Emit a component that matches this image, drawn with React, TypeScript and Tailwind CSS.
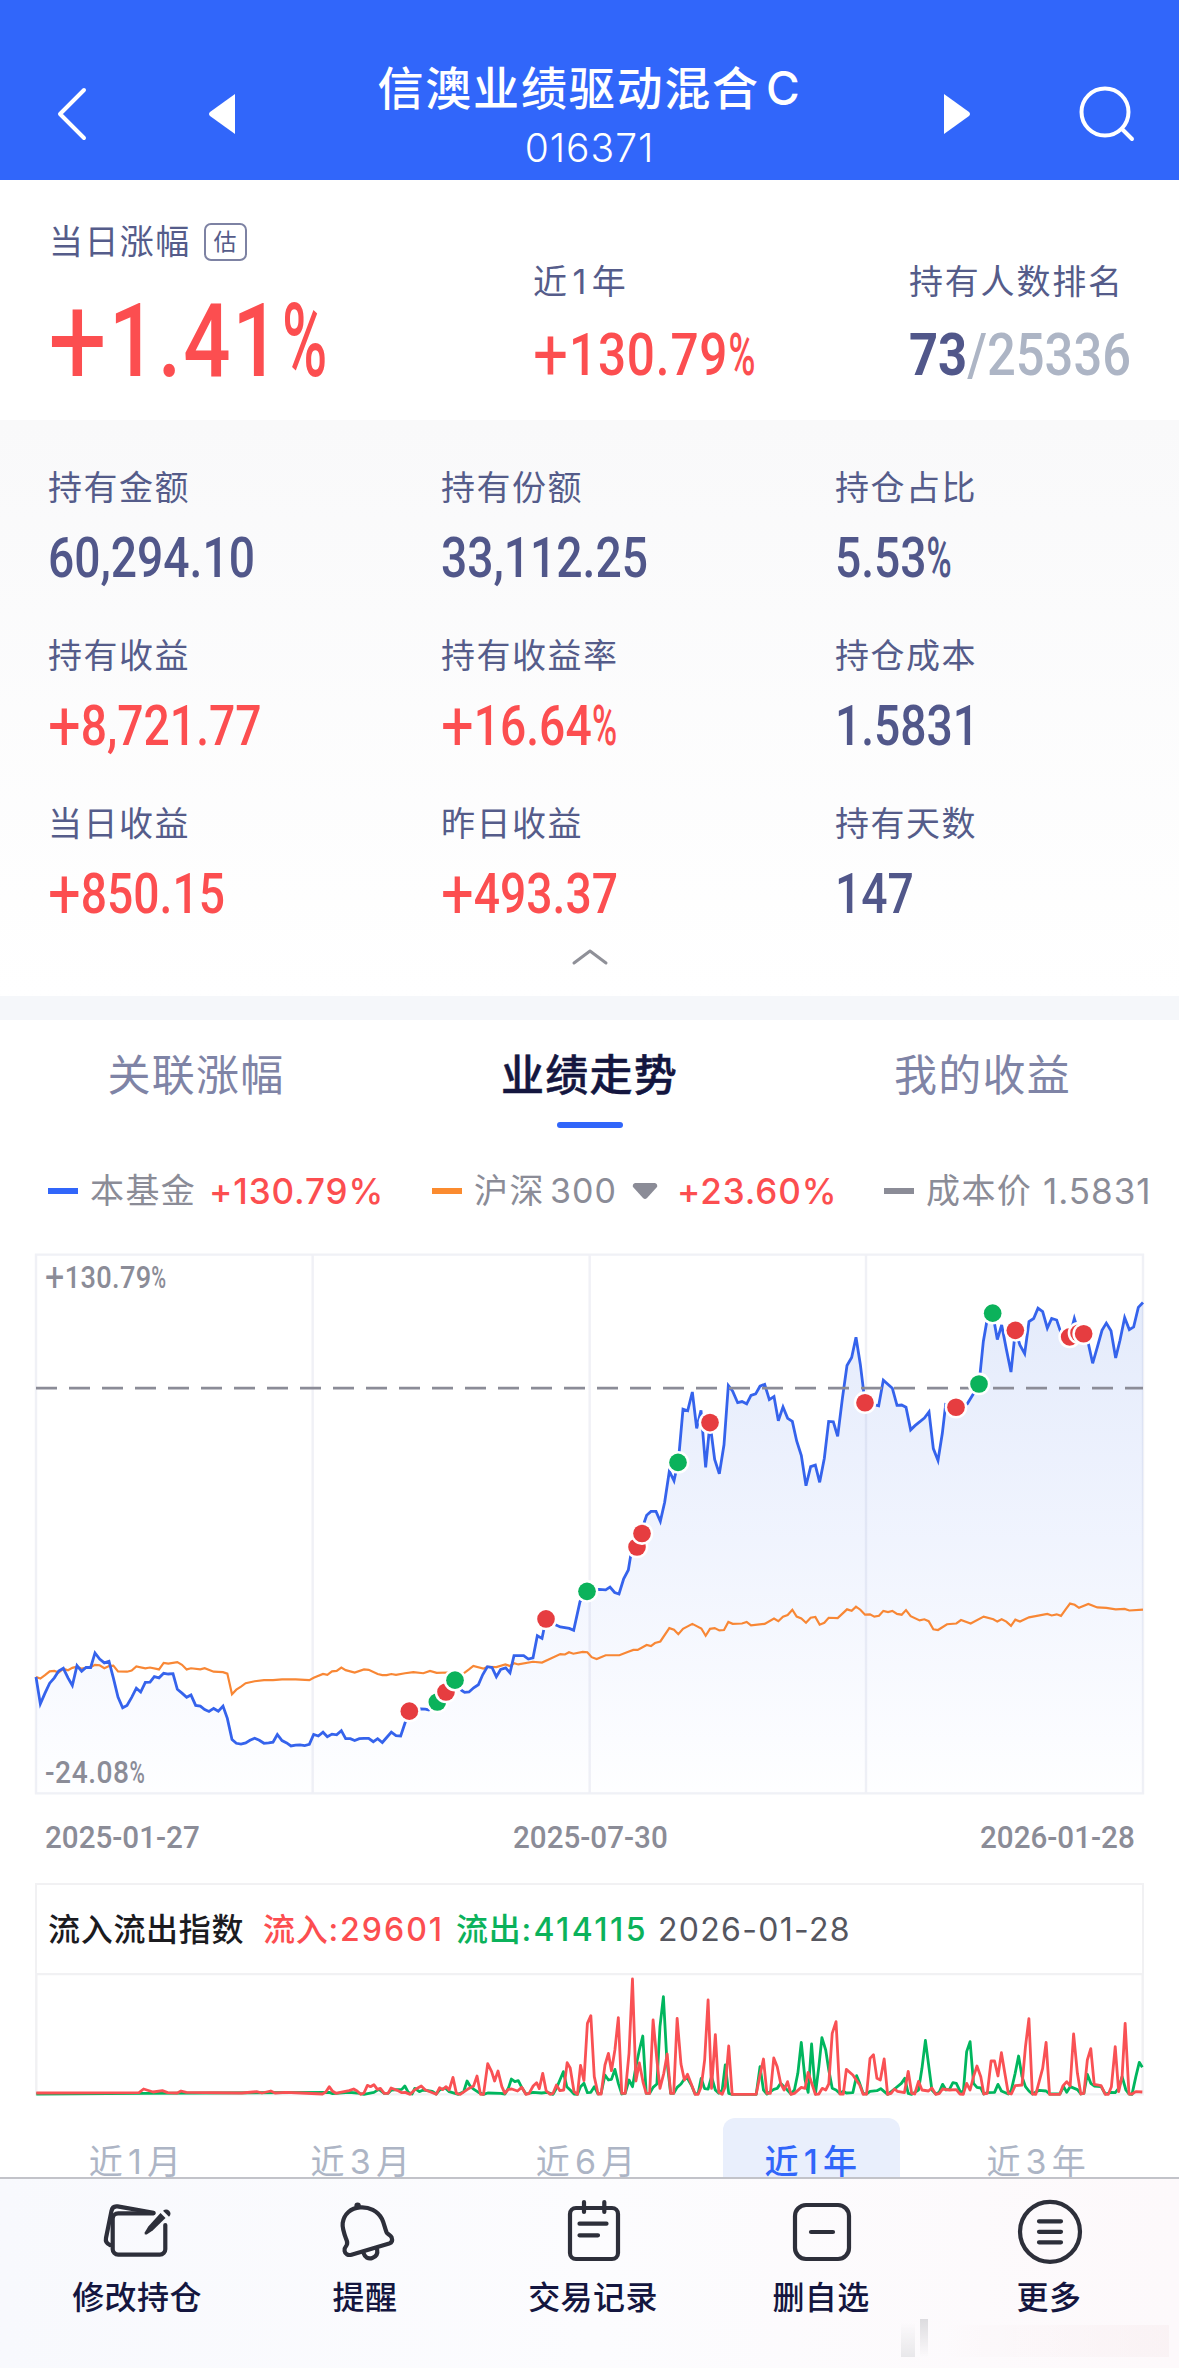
import type { ReactNode } from "react";

type Marker = { x: number; y: number; kind: "buy" | "sell" };

const holdings = [
  { label: "持有金额", value: "60,294.10", up: false },
  { label: "持有份额", value: "33,112.25", up: false },
  { label: "持仓占比", value: "5.53%", up: false },
  { label: "持有收益", value: "+8,721.77", up: true },
  { label: "持有收益率", value: "+16.64%", up: true },
  { label: "持仓成本", value: "1.5831", up: false },
  { label: "当日收益", value: "+850.15", up: true },
  { label: "昨日收益", value: "+493.37", up: true },
  { label: "持有天数", value: "147", up: false },
];

// Performance chart, plot area is 48..3369 by 38..1446
const fundLine =
  "48,1142 61,1212 75,1184 89,1158 103,1144 116,1126 130,1119 144,1144 157,1164 171,1112 185,1127 198,1117 212,1117 225,1079 239,1095 253,1105 267,1101 280,1144 294,1194 308,1222 321,1216 335,1195 349,1171 362,1181 376,1156 390,1155 403,1141 417,1144 431,1132 445,1134 459,1133 472,1174 486,1184 500,1195 513,1189 527,1216 541,1218 554,1227 567,1232 581,1224 595,1231 609,1218 622,1250 636,1305 649,1315 663,1317 677,1314 690,1307 704,1302 718,1307 732,1315 746,1314 759,1312 772,1292 786,1308 800,1314 813,1322 827,1320 840,1319 854,1321 868,1318 881,1292 895,1296 909,1286 922,1298 936,1291 950,1293 964,1282 977,1303 991,1303 1004,1308 1018,1303 1032,1302 1046,1302 1060,1311 1073,1303 1087,1313 1100,1300 1114,1286 1128,1295 1142,1296 1155,1262 1168,1231 1202,1225 1216,1226 1226,1228 1252,1207 1278,1181 1305,1150 1325,1177 1334,1182 1347,1181 1361,1170 1375,1162 1388,1136 1402,1115 1416,1117 1429,1141 1442,1122 1457,1118 1470,1131 1482,1086 1511,1086 1525,1095 1539,1092 1552,1034 1566,1041 1578,990 1608,1006 1621,1011 1648,1015 1661,1020 1680,945 1701,918 1737,913 1757,914 1770,907 1784,921 1797,925 1811,885 1825,862 1832,825 1851,802 1866,767 1873,737 1880,719 1893,709 1908,709 1921,735 1934,685 1948,604 1962,629 1974,581 1978,550 1989,442 2003,446 2017,397 2030,492 2043,445 2057,594 2070,478 2084,573 2098,611 2112,535 2125,380 2138,395 2153,425 2166,422 2180,428 2193,406 2207,402 2220,382 2234,377 2248,417 2262,409 2275,472 2289,436 2303,466 2317,474 2330,525 2344,563 2358,642 2372,592 2386,588 2399,633 2413,570 2426,474 2440,475 2453,513 2467,415 2481,328 2495,307 2508,254 2521,325 2535,424 2576,433 2590,366 2617,387 2631,432 2645,431 2658,437 2672,496 2685,485 2713,465 2727,449 2740,545 2754,576 2767,505 2777,430 2807,437 2842,428 2858,405 2877,377 2890,265 2904,195 2918,191 2932,260 2945,222 2959,285 2973,345 2986,237 3000,275 3014,297 3027,213 3041,205 3054,178 3068,187 3082,230 3095,205 3110,209 3123,243 3149,253 3163,205 3177,245 3191,245 3205,270 3218,322 3232,280 3246,236 3259,217 3273,237 3287,308 3300,262 3314,203 3328,234 3341,227 3355,176 3369,163";

const indexLine =
  "48,1142 61,1146 75,1137 89,1127 103,1126 116,1130 130,1120 144,1124 157,1118 171,1115 185,1120 212,1116 225,1110 239,1111 253,1119 267,1113 280,1112 294,1127 321,1128 335,1125 349,1114 376,1119 390,1117 417,1122 431,1105 445,1107 472,1103 486,1110 500,1122 513,1119 541,1122 554,1119 581,1128 609,1129 622,1133 636,1187 649,1175 663,1167 677,1158 704,1153 732,1150 759,1150 786,1148 827,1148 868,1150 881,1144 909,1134 922,1136 936,1127 950,1126 964,1117 977,1124 1004,1130 1032,1122 1046,1123 1073,1134 1087,1137 1100,1137 1114,1134 1128,1136 1155,1132 1180,1129 1210,1132 1230,1126 1250,1131 1285,1130 1330,1133 1347,1122 1360,1113 1390,1120 1402,1115 1429,1116 1456,1109 1470,1113 1482,1106 1495,1109 1539,1102 1566,1104 1594,1093 1621,1082 1635,1083 1647,1077 1660,1081 1688,1076 1702,1077 1715,1090 1730,1095 1757,1085 1798,1085 1825,1076 1840,1071 1853,1071 1880,1058 1893,1061 1905,1053 1921,1049 1948,1014 1962,1018 1975,1030 1989,1016 2017,1003 2044,1015 2057,1034 2070,1016 2084,1014 2098,1020 2112,1019 2125,998 2138,1003 2166,1002 2180,998 2193,1007 2234,1003 2262,989 2275,996 2289,984 2303,980 2317,966 2330,984 2344,989 2358,1000 2372,987 2386,985 2399,1005 2413,1000 2426,987 2453,988 2481,965 2495,969 2508,958 2521,966 2535,979 2550,978 2563,984 2577,982 2590,969 2604,972 2617,969 2631,977 2645,979 2658,967 2672,983 2699,994 2713,991 2726,996 2740,1017 2754,1019 2781,1004 2809,1002 2823,993 2852,1002 2891,984 2920,991 2932,997 2945,991 2959,997 2973,1008 2986,992 3000,997 3027,986 3082,977 3095,981 3110,978 3123,982 3137,965 3150,950 3164,953 3177,961 3205,951 3232,960 3259,961 3287,965 3314,964 3328,968 3369,966";

const markers: Marker[] = [
  { x: 1168, y: 1231, kind: "buy" },
  { x: 1252, y: 1207, kind: "sell" },
  { x: 1278, y: 1181, kind: "buy" },
  { x: 1305, y: 1150, kind: "sell" },
  { x: 1578, y: 990, kind: "buy" },
  { x: 1701, y: 918, kind: "sell" },
  { x: 1851, y: 802, kind: "buy" },
  { x: 1866, y: 767, kind: "buy" },
  { x: 1974, y: 581, kind: "sell" },
  { x: 2070, y: 477, kind: "buy" },
  { x: 2535, y: 425, kind: "buy" },
  { x: 2808, y: 437, kind: "buy" },
  { x: 2877, y: 376, kind: "sell" },
  { x: 2918, y: 191, kind: "sell" },
  { x: 2986, y: 236, kind: "buy" },
  { x: 3149, y: 253, kind: "buy" },
  { x: 3177, y: 243, kind: "buy" },
  { x: 3191, y: 245, kind: "buy" },
];

// Inflow / outflow, baseline at 703
const inflow =
  "-1423,699 -1154,698 -1142,687 -1117,696 -1093,692 -1079,698 -1054,699 -1044,693 -1030,697 -885,699 -846,695 -832,699 -809,693 -798,699 -769,697 -730,699 -674,702 -665,696 -656,680 -647,694 -638,700 -627,697 -604,692 -592,687 -583,693 -573,703 -565,699 -556,676 -548,680 -539,674 -530,688 -522,685 -512,700 -502,700 -494,684 -478,691 -466,698 -457,697 -444,703 -432,689 -415,678 -405,689 -376,703 -367,683 -359,689 -350,680 -342,690 -332,652 -323,700 -313,703 -294,688 -278,678 -269,648 -260,703 -252,703 -241,611 -231,634 -223,663 -214,633 -204,680 -196,700 -187,688 -178,687 -163,693 -152,682 -141,703 -133,701 -122,678 -113,668 -106,686 -97,640 -88,692 -78,703 -70,700 -61,675 -52,692 -42,690 -33,608 -25,624 -15,695 -6,703 2,616 11,662 20,490 29,467 38,650 48,702 56,702 66,615 75,580 83,632 92,570 101,473 110,700 119,700 129,580 138,357 147,663 156,609 166,668 174,700 183,700 192,480 202,600 210,685 220,640 229,582 238,700 246,700 255,475 265,612 274,660 282,643 292,672 302,703 310,703 318,680 327,600 336,420 345,685 355,524 364,697 373,703 381,680 390,558 399,703 462,703 471,650 481,597 490,700 499,700 508,594 517,620 526,670 535,690 544,665 553,703 562,700 580,682 590,685 598,637 608,672 617,703 626,702 635,685 644,690 652,672 661,520 671,485 681,702 690,702 698,628 715,645 733,675 742,703 751,702 760,595 769,584 778,655 787,660 797,597 806,703 815,700 824,687 832,694 850,698 860,634 869,700 877,702 887,664 896,690 913,693 922,684 932,703 941,701 950,687 968,690 986,689 995,702 1004,703 1013,670 1022,690 1031,650 1040,618 1050,650 1058,702 1067,700 1077,603 1086,603 1095,648 1104,578 1113,640 1122,700 1130,702 1140,677 1158,675 1167,560 1176,476 1185,702 1194,703 1212,625 1221,547 1230,703 1257,703 1265,678 1275,665 1284,678 1293,522 1303,640 1312,702 1320,700 1329,600 1338,566 1347,673 1365,677 1376,703 1384,703 1392,680 1402,560 1411,695 1420,650 1428,490 1438,702 1446,702 1456,695 1473,696";

const outflow =
  "-1423,702 -1142,700 -656,697 -647,701 -604,697 -583,699 -565,703 -539,697 -526,688 -512,700 -502,700 -493,690 -466,688 -458,678 -449,697 -439,702 -432,685 -420,695 -410,690 -386,694 -376,702 -367,690 -352,684 -342,695 -318,703 -304,695 -295,663 -286,680 -277,688 -265,697 -252,703 -241,699 -207,700 -196,702 -187,685 -179,657 -170,665 -161,662 -152,682 -141,702 -122,697 -100,699 -85,697 -70,703 -61,685 -52,660 -43,635 -34,680 -25,690 -15,702 -6,703 2,680 11,670 20,698 29,697 38,680 48,702 56,700 66,645 75,660 83,658 92,628 101,670 110,702 119,700 129,660 138,680 147,620 156,570 165,528 174,700 183,700 192,682 202,672 210,500 219,410 228,600 238,700 246,700 255,682 265,672 274,657 282,655 292,675 302,702 310,700 318,655 327,686 336,687 345,650 355,690 364,700 373,690 381,615 390,700 399,703 462,703 472,620 481,690 490,702 508,688 517,685 526,670 535,680 553,702 562,690 571,640 580,547 590,660 598,697 607,552 617,702 626,620 634,533 644,570 652,630 661,685 671,690 681,700 690,694 698,699 715,698 725,647 733,670 742,700 751,702 760,694 778,692 788,686 806,703 824,687 842,670 851,655 860,700 869,703 887,690 896,625 905,541 914,620 922,690 932,702 941,697 950,673 959,690 968,688 977,668 986,670 995,692 1004,700 1013,575 1022,545 1031,670 1040,682 1050,684 1058,702 1067,698 1086,697 1095,673 1104,693 1122,702 1130,690 1140,640 1149,588 1158,650 1167,680 1176,693 1185,702 1203,691 1221,693 1230,702 1257,702 1267,680 1275,697 1284,680 1303,689 1312,702 1320,700 1329,643 1338,670 1347,678 1365,680 1376,702 1392,697 1402,698 1411,685 1420,650 1430,690 1438,702 1446,703 1456,650 1465,607 1473,622";

const periods = [
  { count: 1, unit: "月", active: false },
  { count: 3, unit: "月", active: false },
  { count: 6, unit: "月", active: false },
  { count: 1, unit: "年", active: true },
  { count: 3, unit: "年", active: false },
];

// Condensed figures: wide thin plus sign, narrow percent sign
function Num({ value, className }: { value: string; className: string }) {
  const plus = value.startsWith("+");
  const percent = value.endsWith("%");
  const digits = value.replace(/^\+/, "").replace(/%$/, "");
  return (
    <div className={`w-fit origin-left font-[Roboto,sans-serif] font-medium whitespace-nowrap ${className}`}>
      {plus && <span className="align-[-0.07em] text-[1.25em] leading-[0] font-normal">+</span>}
      {digits}
      {percent && <span className="inline-block origin-left scale-x-[0.74]">%</span>}
    </div>
  );
}

function Header() {
  return (
    <header className="flex h-[180px] items-start bg-[#3166fa] pl-[54px] text-white">
      <svg className="mt-[84px] h-[60px] w-[36px]" viewBox="0 0 36 60" fill="none" stroke="currentColor" strokeWidth="4" strokeLinecap="round" strokeLinejoin="round">
        <path d="M30 6 6 30l24 24" />
      </svg>
      <svg className="mt-[94px] ml-[118px] h-[40px] w-[28px]" viewBox="0 0 28 40" fill="currentColor">
        <path d="M27 0v40L2 22q-2-2 0-4z" />
      </svg>
      <div className="flex w-[707px] flex-col items-center">
        <h1 className="mt-[58px] flex h-[60px] items-center text-[46px] leading-[60px] font-medium tracking-[1.8px] whitespace-nowrap">
          信澳业绩驱动混合<span className="ml-[6px]">C</span>
        </h1>
        <div className="mt-[8px] text-[39px] leading-[44px] font-light tracking-[1px]">016371</div>
      </div>
      <svg className="mt-[94px] h-[40px] w-[28px]" viewBox="0 0 28 40" fill="currentColor">
        <path d="M1 0v40l25-18q2-2 0-4z" />
      </svg>
      <svg className="mt-[84px] ml-[104px] h-[60px] w-[60px]" viewBox="0 0 60 60" fill="none" stroke="currentColor" strokeWidth="4" strokeLinecap="round">
        <circle cx="30" cy="28" r="23.5" />
        <path d="m47 45 10 10" />
      </svg>
    </header>
  );
}

function Summary() {
  return (
    <section className="flex h-[240px] text-[#555c8a]">
      <div className="w-[484px] pt-[40px] pl-[49px]">
        <div className="flex h-[44px] items-center gap-[13px]">
          <span className="text-[34px] leading-[44px] tracking-[1.4px]">当日涨幅</span>
          <span className="flex h-[38px] w-[43px] items-center justify-center rounded-[7px] border-2 border-[#7d82a3] text-[23px] leading-none">
            估
          </span>
        </div>
        <Num className="-ml-px mt-[17px] scale-x-[0.815] text-[102px] leading-[120px] tracking-[2.4px] text-[#fc4e50]" value="+1.41%" />
      </div>
      <div className="w-[425px] pt-[80px] pl-[49px]">
        <div className="text-[34px] leading-[44px] tracking-[1.4px]">
          近<span className="px-[4px]">1</span>年
        </div>
        <Num className="mt-[16px] scale-x-[0.825] text-[60px] leading-[70px] tracking-[1px] text-[#fc4e50]" value="+130.79%" />
      </div>
      <div className="pt-[80px]">
        <div className="text-[34px] leading-[44px] tracking-[1.8px]">持有人数排名</div>
        <div className="mt-[16px] flex origin-left scale-x-[0.845] font-[Roboto,sans-serif] text-[60px] leading-[70px]">
          <span className="font-bold text-[#51578a]">73</span>
          <span className="font-medium text-[#adb5c5]">/25336</span>
        </div>
      </div>
    </section>
  );
}

function Holdings() {
  return (
    <section className="h-[576px] bg-linear-to-b from-[#f9f9fa] to-white pt-[46px]">
      <div className="grid grid-cols-[393px_394px_392px]">
        {holdings.map((item) => (
          <div key={item.label} className="h-[168px] pl-[48px]">
            <div className="text-[34px] leading-[44px] tracking-[1.5px] text-[#555c8a]">{item.label}</div>
            <Num
              className={`mt-[15px] scale-x-[0.825] text-[56px] leading-[66px] ${item.up ? "text-[#fc4e50]" : "text-[#51578a]"}`}
              value={item.value}
            />
          </div>
        ))}
      </div>
      <svg className="mx-auto -mt-[23px] h-[20px] w-[40px]" viewBox="0 0 40 20" fill="none" stroke="#8f9098" strokeWidth="3" strokeLinecap="round" strokeLinejoin="round">
        <path d="M4 16 20 4l16 12" />
      </svg>
    </section>
  );
}

function Tabs() {
  return (
    <nav className="flex h-[112px] text-[43px] leading-[60px] tracking-[1.2px] text-[#7f84a6]">
      <div className="w-[392px] pt-[25px] text-center">关联涨幅</div>
      <div className="flex w-[395px] flex-col items-center pt-[25px]">
        <div className="font-medium text-[#14163f] [-webkit-text-stroke:0.5px_#14163f]">业绩走势</div>
        <div className="mt-[17px] h-[6px] w-[66px] rounded-full bg-[#3166fa]" />
      </div>
      <div className="w-[391px] pt-[25px] text-center">我的收益</div>
    </nav>
  );
}

function Legend() {
  return (
    <div className="flex h-[118px] items-center pl-[48px] text-[34px] leading-[44px] whitespace-nowrap text-[#8b8c97]">
      <div className="flex w-[384px] items-center">
        <i className="mr-[12px] h-[6px] w-[30px] bg-[#3166fa]" />
        <span className="w-[119px] tracking-[1.4px]">本基金</span>
        <span className="text-[35px] font-medium tracking-[0.9px] text-[#fc4e50]">+130.79%</span>
      </div>
      <div className="flex w-[452px] items-center">
        <i className="mr-[12px] h-[6px] w-[30px] bg-[#fb8b2f]" />
        <span className="w-[76px] tracking-[1.4px]">沪深</span>
        <span className="w-[82px] tracking-[1px]">300</span>
        <svg className="mr-[19px] h-[16px] w-[26px]" viewBox="0 0 26 16" fill="#8b8c97">
          <path d="M3 0h20q3 1 2 4l-10 11q-2 2-4 0L1 4q-1-3 2-4z" />
        </svg>
        <span className="text-[35px] font-medium tracking-[0.9px] text-[#fc4e50]">+23.60%</span>
      </div>
      <div className="flex items-center">
        <i className="mr-[12px] h-[6px] w-[30px] bg-[#8b8c97]" />
        <span className="w-[117px] tracking-[1.4px]">成本价</span>
        <span className="text-[35px] tracking-[1px]">1.5831</span>
      </div>
    </div>
  );
}

function PerformanceChart() {
  return (
    <section className="h-[633px]">
      <div className="relative h-[548px]">
        <svg className="block h-[548px] w-[1179px]" viewBox="-60 26 3537 1432" preserveAspectRatio="none" fill="none">
          <defs>
            <linearGradient id="fundFill" gradientUnits="userSpaceOnUse" x1="0" y1="163" x2="0" y2="1446">
              <stop offset="0" stopColor="#3166e0" stopOpacity="0.13" />
              <stop offset="0.5" stopColor="#3166f0" stopOpacity="0.07" />
              <stop offset="1" stopColor="#3166fa" stopOpacity="0.005" />
            </linearGradient>
          </defs>
          <g stroke="#f0f1f6" strokeWidth="2.4">
            <rect x="48" y="38" width="3321" height="1408" vectorEffect="non-scaling-stroke" />
            <path d="M878 38V1446M1709 38V1446M2538 38V1446" vectorEffect="non-scaling-stroke" />
          </g>
          <polygon points={`${fundLine} 3369,1446 48,1446`} fill="url(#fundFill)" />
          <polyline points={indexLine} stroke="#f88735" strokeWidth="2.2" vectorEffect="non-scaling-stroke" />
          <polyline points={fundLine} stroke="#3563ec" strokeWidth="2.8" vectorEffect="non-scaling-stroke" />
          <path d="M48 387H3369" stroke="#8b8c97" strokeWidth="2.8" strokeDasharray="21 12" vectorEffect="non-scaling-stroke" />
          {markers.map((m) => (
            <g key={`${m.x}-${m.y}`}>
              <ellipse cx={m.x} cy={m.y} rx="34" ry="29.6" fill="#fff" />
              <ellipse cx={m.x} cy={m.y} rx="26.5" ry="23" fill={m.kind === "buy" ? "#e63d40" : "#0bb25b"} />
            </g>
          ))}
        </svg>
        <Num className="absolute top-[9px] left-[45px] scale-x-[0.85] text-[32px] leading-[36px] tracking-[0.4px] text-[#8b8c97]" value="+130.79%" />
        <Num className="absolute bottom-[8px] left-[45px] scale-x-[0.88] text-[32px] leading-[36px] tracking-[0.6px] text-[#8b8c97]" value="-24.08%" />
      </div>
      <div className="flex items-center justify-between pt-[20px] pr-[45px] pl-[45px] text-[#8b8c97]">
        {["2025-01-27", "2025-07-30", "2026-01-28"].map((date) => (
          <div key={date} className="w-[154px]">
            <Num className="scale-x-[0.925] text-[32px] leading-[38px]" value={date} />
          </div>
        ))}
      </div>
    </section>
  );
}

function FlowChart() {
  return (
    <section className="h-[235px]">
      <div className="mr-[35px] ml-[35px] flex h-[90px] items-center border-2 border-b-0 border-[#f1f1f3] pt-[2px] pl-[11px] text-[32px] leading-[40px] font-medium whitespace-nowrap">
        <span className="w-[215px] tracking-[0.7px] text-[#1b1b1f]">流入流出指数</span>
        <span className="w-[193px] tracking-[0.7px] text-[#fc4e50]">
          流入<span className="tracking-[2px]">:29601</span>
        </span>
        <span className="w-[202px] tracking-[0.7px] text-[#0bb25b]">
          流出<span className="tracking-[2.4px]">:414115</span>
        </span>
        <span className="font-normal tracking-[1.3px] text-[#55565f]">2026-01-28</span>
      </div>
      <svg className="block h-[126px] w-[1179px]" viewBox="-1518 339 3087 378" preserveAspectRatio="none" fill="none">
        <path d="M-1423 339V703H1474V339M-1423 342H1474" stroke="#f1f1f3" strokeWidth="2.4" vectorEffect="non-scaling-stroke" />
        <polyline points={outflow} stroke="#00b65e" strokeWidth="2.8" strokeLinejoin="round" vectorEffect="non-scaling-stroke" />
        <polyline points={inflow} stroke="#f95154" strokeWidth="2.8" strokeLinejoin="round" vectorEffect="non-scaling-stroke" />
      </svg>
    </section>
  );
}

function Periods() {
  return (
    <div className="flex h-[59px] gap-[48.3px] pl-[47px] text-[34px] leading-[30px] tracking-[1.2px] text-[#adb5c5]">
      {periods.map((p) => (
        <div
          key={`${p.count}${p.unit}`}
          className={`w-[177px] shrink-0 rounded-t-[12px] pt-[29px] text-center ${p.active ? "bg-[#e9effc] font-medium text-[#3166fa]" : ""}`}
        >
          近<span className="px-[4px]">{p.count}</span>
          {p.unit}
        </div>
      ))}
    </div>
  );
}

function Action({ label, children }: { label: string; children: ReactNode }) {
  return (
    <div className="flex w-[228px] flex-col items-center">
      <svg className="mt-[16px] h-[72px] w-[72px]" viewBox="0 0 72 72" fill="none" stroke="#2d2f3a" strokeWidth="4.2" strokeLinecap="round" strokeLinejoin="round">
        {children}
      </svg>
      <div className="mt-[11px] text-[32px] leading-[40px] font-medium tracking-[0.4px] text-[#14163f]">{label}</div>
    </div>
  );
}

function BottomBar() {
  return (
    <footer className="relative flex h-[191px] overflow-hidden border-t-2 border-[#c2c3c9] bg-linear-to-r from-[#f8f9fd] via-[#fcfcfe] to-[#fdf9fb] pl-[23px]">
      <Action label="修改持仓">
        <path d="M52.5 18.3H17.2a5.5 5.5 0 0 0-5.5 5.5v30.4a5.5 5.5 0 0 0 5.5 5.5h41.6a5.5 5.5 0 0 0 5.5-5.5V30" />
        <path d="M52.5 17.8 16.5 11.4q-5-.7-6 4.4L5 43q-1 5 4 7" />
        <path d="m59.5 18 5 5-12.8 12.6-6 3.8q-2.6.8-2-2l3.6-6z" fill="#2d2f3a" stroke="none" />
        <path d="M62 15.8q3.3-2.6 6.2 0 2.7 3-.2 6z" fill="#2d2f3a" stroke="none" />
      </Action>
      <Action label="提醒">
        <path d="M17.7 50q1.2-2-.4-5.6C14.5 37 13 33 13.7 28 15 19 22 13 31 12.4c9-.8 17.8 3.6 22 11.6 2 4 2.8 9 4.6 13.4.8 1.8 4 2.6 5 5 1 2.8.4 5.2-2.4 6.2L22.5 59.7c-3.4 1-6.5-.7-6.9-3.7-.3-2.4.8-4.4 2.1-6z" />
        <circle cx="28.6" cy="10.6" r="3.2" fill="#2d2f3a" stroke="none" />
        <path d="M34.3 57.7c1.5 4.6 5 6.6 9 5.3 3.8-1.3 5.6-4.5 4.8-8.6" />
      </Action>
      <Action label="交易记录">
        <rect x="13" y="13" width="48" height="51" rx="6" />
        <path d="M27 7v10M47.3 7v10M22.5 28.7H49.5M22.5 40.3H41" />
      </Action>
      <Action label="删自选">
        <rect x="10" y="10" width="54" height="54" rx="11" />
        <path d="M26 37H48" />
      </Action>
      <Action label="更多">
        <circle cx="37" cy="36.8" r="30" />
        <path d="M26 26.3H48M26 36.8H48M26 47.3H48" />
      </Action>
      {/* faint smudge in the corner */}
      <div className="absolute right-[10px] bottom-[11px] flex h-[38px] w-[268px] items-end opacity-60">
        <div className="h-[34px] w-[14px] bg-linear-to-b from-transparent to-[#dcdcdf]" />
        <div className="ml-[5px] h-[38px] w-[8px] bg-linear-to-b from-[#c8c8cc] to-transparent" />
        <div className="ml-[18px] h-[32px] flex-1 bg-linear-to-r from-transparent to-[#f8eef0]" />
      </div>
    </footer>
  );
}

export default function App() {
  return (
    <div className="h-[2368px] w-[1179px] overflow-hidden bg-white font-[Inter,'Noto_Sans_CJK_SC',sans-serif]">
      <Header />
      <Summary />
      <Holdings />
      <div className="h-[24px] bg-[#f5f7fa]" />
      <Tabs />
      <Legend />
      <PerformanceChart />
      <FlowChart />
      <Periods />
      <BottomBar />
    </div>
  );
}
